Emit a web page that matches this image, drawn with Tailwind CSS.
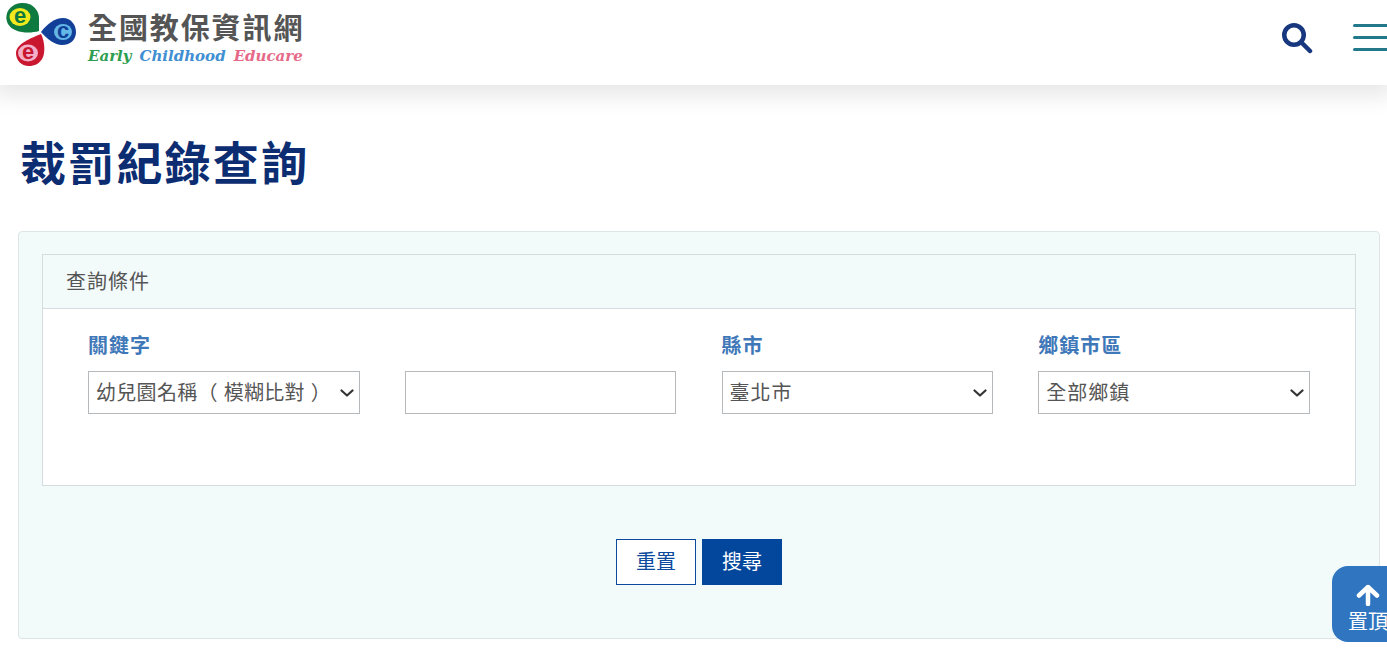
<!DOCTYPE html>
<html lang="zh-TW">
<head>
    <meta charset="UTF-8" />
    <meta name="viewport" content="width=device-width, initial-scale=1" />
    <title>裁罰紀錄查詢</title>
    <script src="https://cdn.jsdelivr.net/npm/@tailwindcss/browser@4"></script>
</head>
<body class="h-screen w-full overflow-hidden bg-white font-['Liberation_Sans','Noto_Sans_CJK_TC',sans-serif] text-[#333]">

    <!-- Header -->
    <header class="flex h-[85px] items-center justify-between bg-white shadow-[0_6px_20px_6px_rgba(0,0,0,0.09)]">
        <a class="flex items-start self-start pt-[2px] pl-[5px]" href="#">
            <svg class="h-[66px] w-[76px] shrink-0" viewBox="0 0 76 66">
                <path d="M34 29C24 32 8 31 3 22C-2 12 5 2 16 1C27 0 34 8 34 16Z" fill="#0f7a3f"/>
                <ellipse cx="15" cy="15" rx="10.5" ry="9" fill="#f2ea1c"/>
                <path d="M36 30C42 22 50 16 58 16C66 16 71 23 71 30C71 37 66 43 57 43C50 43 42 37 36 30Z" fill="#123f98"/>
                <ellipse cx="58" cy="30" rx="9" ry="8" fill="#63b8e8"/>
                <path d="M36 32C40 40 40 50 38 55C35 62 29 64 24 64C16 64 11 58 11 51C11 42 26 36 36 32Z" fill="#c8172f"/>
                <ellipse cx="23" cy="51" rx="10" ry="8.5" fill="#f3afc8"/>
                <text x="15" y="21" text-anchor="middle" font-family="Liberation Sans" font-weight="700" font-size="22" fill="#0f7a3f">e</text>
                <text x="58" y="36" text-anchor="middle" font-family="Liberation Sans" font-weight="700" font-size="22" fill="#123f98">c</text>
                <text x="23" y="57" text-anchor="middle" font-family="Liberation Sans" font-weight="700" font-size="22" fill="#c8172f">e</text>
            </svg>
            <div class="ml-[7px] pt-[9px]">
                <div class="text-[29px] leading-[36px] font-bold tracking-[1.9px] whitespace-nowrap text-[#555]">全國教保資訊網</div>
                <div class="flex gap-[8px] font-['DejaVu_Serif',serif] text-[15px] leading-[18px] font-bold italic whitespace-nowrap">
                    <span class="text-[#2e9e50]">Early</span>
                    <span class="text-[#3f8fd2]">Childhood</span>
                    <span class="text-[#e66a88]">Educare</span>
                </div>
            </div>
        </a>
        <div class="flex items-center pb-[11px]">
            <svg class="mt-[2px] h-[32px] w-[32px]" viewBox="0 0 32 32" fill="none" stroke="#17387f" stroke-linecap="round">
                <circle cx="13" cy="13" r="9.75" stroke-width="4.5"/>
                <path d="M20.5 20.5L29 29" stroke-width="4.5"/>
            </svg>
            <div class="mr-[-1px] ml-[40px] flex w-[35px] flex-col gap-[9px]">
                <div class="h-[3px] rounded-l bg-[#21798a]"></div>
                <div class="h-[3px] rounded-l bg-[#21798a]"></div>
                <div class="h-[3px] rounded-l bg-[#21798a]"></div>
            </div>
        </div>
    </header>

    <main class="px-[18px]">
        <h1 class="mt-[49px] mb-[37px] pl-[2px] text-[46px] leading-[60px] font-bold tracking-[2.2px] text-[#0c2d72]">裁罰紀錄查詢</h1>

        <!-- 查詢表單 -->
        <section class="h-[408px] w-[1362px] rounded border border-[#dde5e7] bg-[#f3fafa] px-[23px] pt-[22px]">
            <div class="h-[232px] border border-[#d5dcdf] bg-white">
                <div class="flex h-[54px] items-center border-b border-[#d5dcdf] bg-[#f3fafa] pl-[23px] text-[20px] tracking-[1px] text-[#555]">查詢條件</div>
                <div class="grid grid-cols-4 gap-x-[45px] pt-[22px] pr-[45px] pl-[45px]">
                    <div>
                        <label class="block h-[40px] text-[20px] leading-[30px] font-bold tracking-[1px] text-[#3f78b8]">關鍵字</label>
                        <div class="relative">
                            <select class="h-[43px] w-full appearance-none rounded-none border border-[#b5b9bc] bg-white pl-[7px] text-[20px] tracking-[0.3px] text-[#555]">
                                <option>幼兒園名稱（ 模糊比對 ）</option>
                            </select>
                            <svg class="absolute top-[18px] right-[6px] h-[8px] w-[14px]" viewBox="0 0 14 8" fill="none" stroke="#333" stroke-width="2.2" stroke-linecap="round" stroke-linejoin="round"><path d="M1.5 1.5L7 6.5L12.5 1.5"/></svg>
                        </div>
                    </div>
                    <div>
                        <div class="h-[40px]"></div>
                        <input class="h-[43px] w-[271px] border border-[#b5b9bc] bg-white" type="text" />
                    </div>
                    <div>
                        <label class="block h-[40px] text-[20px] leading-[30px] font-bold tracking-[1px] text-[#3f78b8]">縣市</label>
                        <div class="relative">
                            <select class="h-[43px] w-full appearance-none rounded-none border border-[#b5b9bc] bg-white pl-[7px] text-[20px] tracking-[1px] text-[#555]">
                                <option>臺北市</option>
                            </select>
                            <svg class="absolute top-[18px] right-[6px] h-[8px] w-[14px]" viewBox="0 0 14 8" fill="none" stroke="#333" stroke-width="2.2" stroke-linecap="round" stroke-linejoin="round"><path d="M1.5 1.5L7 6.5L12.5 1.5"/></svg>
                        </div>
                    </div>
                    <div>
                        <label class="block h-[40px] text-[20px] leading-[30px] font-bold tracking-[1px] text-[#3f78b8]">鄉鎮市區</label>
                        <div class="relative">
                            <select class="h-[43px] w-full appearance-none rounded-none border border-[#b5b9bc] bg-white pl-[7px] text-[20px] tracking-[1px] text-[#555]">
                                <option>全部鄉鎮</option>
                            </select>
                            <svg class="absolute top-[18px] right-[6px] h-[8px] w-[14px]" viewBox="0 0 14 8" fill="none" stroke="#333" stroke-width="2.2" stroke-linecap="round" stroke-linejoin="round"><path d="M1.5 1.5L7 6.5L12.5 1.5"/></svg>
                        </div>
                    </div>
                </div>
            </div>
            <div class="mt-[53px] flex justify-center gap-[6px]">
                <button class="h-[46px] w-[80px] border border-[#0b4a9c] bg-white text-[20px] text-[#0b4a9c]">重置</button>
                <button class="h-[46px] w-[80px] bg-[#03479c] text-[20px] text-white">搜尋</button>
            </div>
        </section>
    </main>

    <!-- 置頂 -->
    <a class="fixed top-[566px] left-[1332px] flex h-[76px] w-[72px] flex-col items-center rounded-[16px] bg-[#2f75c0] pt-[18px] text-white" href="#">
        <svg class="h-[22px] w-[24px]" viewBox="0 0 24 22" fill="none" stroke="white" stroke-width="4.5" stroke-linecap="round" stroke-linejoin="round">
            <path d="M12 20V3M3 11.500L12 3L21 11.500"/>
        </svg>
        <span class="mt-[3px] text-[20px] leading-[26px] whitespace-nowrap">置頂</span>
    </a>

</body>
</html>
